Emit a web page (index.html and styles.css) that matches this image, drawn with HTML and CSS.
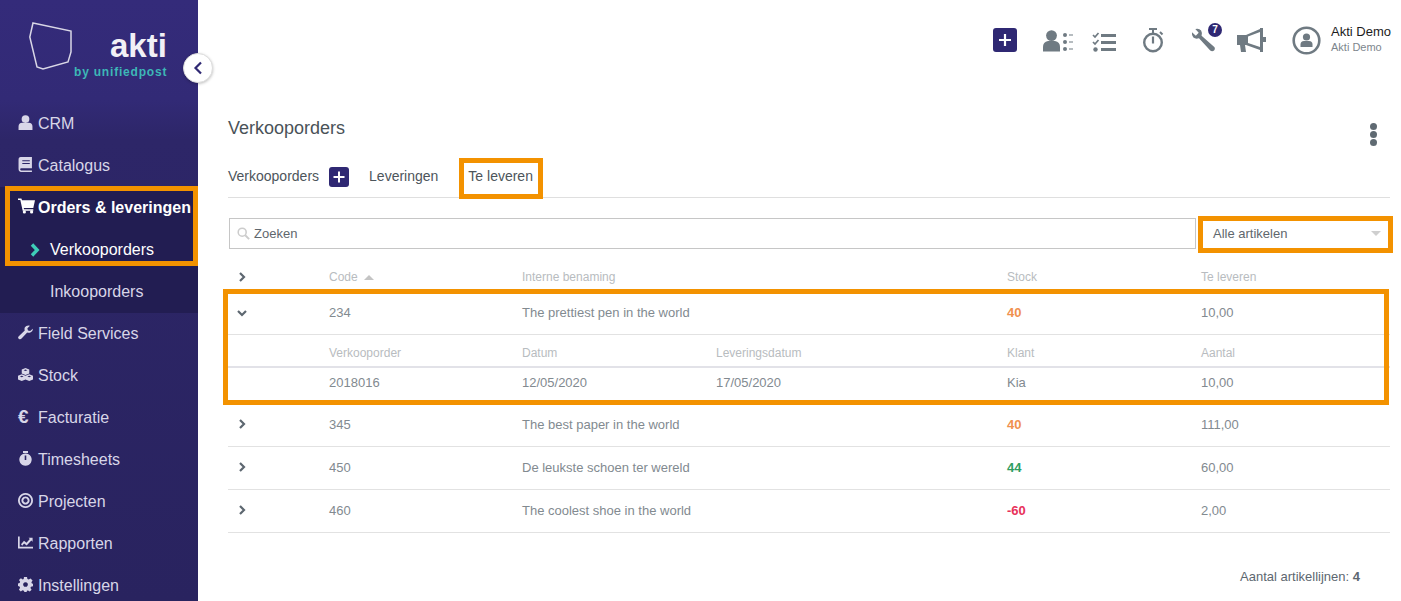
FILE: index.html
```html
<!DOCTYPE html>
<html lang="nl">
<head>
<meta charset="utf-8">
<title>Verkooporders</title>
<link rel="stylesheet" href="styles.css">
</head>
<body>
<div class="app">
  <aside class="sidebar">
    <div class="brand">
      <svg class="brand-shape" width="46" height="50" viewBox="0 0 46 50"><path d="M4 1 L42 9 L42 30 L39 40 L14 47 L8 45 L0.8 15 Z" fill="none" stroke="#d9d7e6" stroke-width="1.5"/></svg>
      <div class="brand-name">akti</div>
      <div class="brand-sub">by unifiedpost</div>
    </div>
    <nav class="nav">
      <a class="nav-item"><svg class="ni" viewBox="0 0 14 14"><circle cx="7" cy="3.8" r="3.6"/><path d="M0.5 14 V11 Q0.5 7.2 4 7.2 H10 Q13.5 7.2 13.5 11 V14 Z"/></svg>CRM</a>
      <a class="nav-item"><svg class="ni" viewBox="0 0 14 14"><path d="M2.5 0 H13 V10.5 H3 Q2 10.5 2 11.5 Q2 12.5 3 12.5 H13 V14 H2.5 Q0.5 14 0.5 11.5 V2.5 Q0.5 0 2.5 0 Z M4 3 V4 H11 V3 Z M4 5.5 V6.5 H11 V5.5 Z" fill-rule="evenodd"/></svg>Catalogus</a>
      <div class="nav-group">
        <a class="nav-item is-active"><svg class="ni ni-cart" viewBox="0 0 16 14"><path d="M0 0 H3.2 L3.8 1.6 H16 L14.4 8.8 H5.4 L5.7 10 H14.4 V11.4 H4.4 L2.2 1.4 H0 Z"/><circle cx="6" cy="12.6" r="1.5"/><circle cx="12.8" cy="12.6" r="1.5"/></svg>Orders &amp; leveringen</a>
        <a class="nav-sub is-current"><svg class="chev" width="10" height="14" viewBox="0 0 10 14"><path d="M2 1.5 L7.2 7 L2 12.5" fill="none" stroke="#3ecdb8" stroke-width="3.4"/></svg>Verkooporders</a>
        <a class="nav-sub">Inkooporders</a>
      </div>
      <a class="nav-item"><svg class="ni" viewBox="0 0 16 15"><path d="M15.8 3.4 L13 6 L10.6 5.3 L10 3 L12.8 0.3 Q9 -0.6 7.4 2 Q6.6 3.6 7.2 5.4 L0.8 11.4 Q-0.6 13 0.8 14.2 Q2.4 15.4 3.8 14 L9.8 7.6 Q11.8 8.2 13.6 7.2 Q16.2 5.8 15.8 3.4 Z"/></svg>Field Services</a>
      <a class="nav-item"><svg class="ni" viewBox="0 0 16 14"><path d="M8 0 L12 1.6 V6 L8 7.6 L4 6 V1.6 Z M4 6.6 L8 8.2 V12.4 L4 14 L0 12.4 V8.2 Z M12 6.6 L16 8.2 V12.4 L12 14 L8 12.4 V8.2 Z M6 2.4 L8 3.2 L10 2.4 L8 1.6 Z M2 9 L4 9.8 L6 9 L4 8.2 Z M10 9 L12 9.8 L14 9 L12 8.2 Z" fill-rule="evenodd"/></svg>Stock</a>
      <a class="nav-item"><span class="ni euro">€</span>Facturatie</a>
      <a class="nav-item"><svg class="ni" viewBox="0 0 14 15"><rect x="4.5" y="0" width="5" height="2"/><path d="M7 2.4 A6.2 6.2 0 1 1 6.99 2.4 Z M6.2 4.5 V9 H7.8 V4.5 Z" fill-rule="evenodd"/></svg>Timesheets</a>
      <a class="nav-item"><svg class="ni" viewBox="0 0 14 14"><path d="M7 0 A7 7 0 1 1 6.99 0 Z M7 1.7 A5.3 5.3 0 1 0 7.01 1.7 Z M7 3.2 A3.8 3.8 0 1 1 6.99 3.2 Z M7 5 A2 2 0 1 0 7.01 5 Z" fill-rule="evenodd"/></svg>Projecten</a>
      <a class="nav-item"><svg class="ni" viewBox="0 0 15 14"><path d="M0 1 H1.7 V11.3 H15 V13 H0 Z M3 8.8 L6 5.2 L8.5 7.2 L11.8 3.4 L10.6 2.2 H14.6 V6.2 L13.3 4.9 L8.7 10 L6.1 8 L4.2 10.2 Z"/></svg>Rapporten</a>
      <a class="nav-item"><svg class="ni" viewBox="0 0 14 14"><path d="M5.6 0 H8.4 L8.8 1.9 L10 2.4 L11.7 1.3 L13.6 3.2 L12.5 4.8 L13 6 L14 6.3 V8.6 L12.1 9 L11.6 10.3 L12.7 12 L11 13.6 L9.3 12.5 L8.4 12.9 L8 14 H6 L5.5 12.9 L4.2 12.4 L2.6 13.5 L0.9 11.8 L1.9 10.1 L1.4 8.9 L0 8.5 V6.1 L1.5 5.7 L2 4.5 L0.9 2.9 L2.7 1.2 L4.4 2.3 L5.3 1.8 Z M7 4.8 A2.2 2.2 0 1 0 7.01 4.8 Z" fill-rule="evenodd"/></svg>Instellingen</a>
    </nav>
    <button class="collapse" type="button"><svg width="10" height="14" viewBox="0 0 10 14"><path d="M8 1.5 L2.5 7 L8 12.5" fill="none" stroke="#2f2873" stroke-width="2.2"/></svg></button>
  </aside>

  <main class="main">
    <header class="topbar">
      <span class="add-btn add-top"><svg width="14" height="14" viewBox="0 0 14 14"><path d="M7 1 V13 M1 7 H13" stroke="#fff" stroke-width="2.2"/></svg></span>
      <svg class="ti ti-contacts" width="30" height="22" viewBox="0 0 30 22"><circle cx="8.5" cy="5.6" r="5.4" fill="#6f7a82"/><path d="M0 21.5 V17 Q0 12 5 11 H12 Q17 12 17 17 V21.5 Z" fill="#6f7a82"/><g fill="#6f7a82"><circle cx="22" cy="5" r="2"/><circle cx="22" cy="12" r="2"/><circle cx="22" cy="19" r="2"/><rect x="26" y="4.5" width="4" height="1"/><rect x="26" y="11.5" width="4" height="1"/><rect x="26" y="18.5" width="4" height="1"/></g></svg>
      <svg class="ti ti-tasks" width="25" height="20" viewBox="0 0 25 20"><g fill="none" stroke="#6f7a82" stroke-width="1.7"><path d="M1 3 L3 5 L6.5 1"/><path d="M1 10 L3 12 L6.5 8"/></g><circle cx="3.5" cy="17.5" r="2.2" fill="#6f7a82"/><g fill="#6f7a82"><rect x="9" y="2" width="15" height="3"/><rect x="9" y="9" width="15" height="3"/><rect x="9" y="16" width="15" height="3"/></g></svg>
      <svg class="ti ti-timer" width="22" height="25" viewBox="0 0 22 25"><g fill="none" stroke="#6f7a82"><circle cx="11" cy="14.5" r="8.8" stroke-width="2.4"/><path d="M7 1 H15 M11 1 V5" stroke-width="2"/><path d="M18 4 L20.5 6.5" stroke-width="2"/><path d="M11 8.5 V15.5" stroke-width="2.2"/></g></svg>
      <span class="ti-wrench-wrap"><svg width="25" height="25" viewBox="0 0 26 26"><path d="M1 4.5 L5 8 L8 5 L4.5 1 Q8.5 0 10.5 2.5 Q12 5 11 8 L24.5 20 Q25.5 22 24 23.5 Q22 25 20 23.5 L8.3 10.7 Q5 12 2.5 10 Q0.5 8 1 4.5 Z" fill="#6f7a82"/></svg><span class="badge">7</span></span>
      <svg class="ti ti-horn" width="29" height="25" viewBox="0 0 29 25"><path d="M0 7 H9 L23 1 V0 H26 V24 H23 V22 L9 17 H8 L9 24 H4 L3 17 H0 Z M11 8.5 V15 L23 19 V4 Z" fill="#6f7a82" fill-rule="evenodd"/><path d="M26 9 H29 V14 H26 Z" fill="#6f7a82"/></svg>
      <svg class="ti ti-user" width="29" height="29" viewBox="0 0 29 29"><circle cx="14.5" cy="14.5" r="12.8" fill="none" stroke="#6f7a82" stroke-width="2.6"/><circle cx="14.5" cy="11" r="3.6" fill="#6f7a82"/><path d="M8.5 21 V18.5 Q8.5 15 12 15 H17 Q20.5 15 20.5 18.5 V21 Z" fill="#6f7a82"/></svg>
      <div class="who"><div class="who-name">Akti Demo</div><div class="who-sub">Akti Demo</div></div>
    </header>

    <section class="content">
      <div class="title-row">
        <h1 class="title">Verkooporders</h1>
        <span class="kebab"><i></i><i></i><i></i></span>
      </div>
      <div class="tabs">
        <a class="tab tab-first">Verkooporders</a>
        <span class="add-btn add-tab"><svg width="12" height="12" viewBox="0 0 12 12"><path d="M6 0.5 V11.5 M0.5 6 H11.5" stroke="#fff" stroke-width="2"/></svg></span>
        <a class="tab tab-mid">Leveringen</a>
        <a class="tab tab-last">Te leveren</a>
      </div>
      <div class="filters">
        <div class="search">
          <svg width="13" height="13" viewBox="0 0 15 15"><circle cx="6" cy="6" r="4.6" fill="none" stroke="#ccc" stroke-width="1.8"/><path d="M9.5 9.5 L14 14" stroke="#ccc" stroke-width="2.2"/></svg>
          <span>Zoeken</span>
        </div>
        <div class="select"><span>Alle artikelen</span><i class="caret"></i></div>
      </div>

      <div class="table">
        <div class="row head">
          <span class="c-arrow"><svg class="arrow" viewBox="0 0 8 10"><path d="M2 1 L6 5 L2 9" /></svg></span>
          <span class="c-code">Code <i class="sort"></i></span>
          <span class="c-name">Interne benaming</span>
          <span class="c-stock">Stock</span>
          <span class="c-qty">Te leveren</span>
        </div>
        <div class="row item open">
          <span class="c-arrow"><svg class="arrow arrow-down" viewBox="0 0 10 8"><path d="M1 2 L5 6 L9 2" /></svg></span>
          <span class="c-code">234</span>
          <span class="c-name">The prettiest pen in the world</span>
          <span class="c-stock warn">40</span>
          <span class="c-qty">10,00</span>
        </div>
        <div class="row subhead">
          <span class="c-arrow"></span>
          <span class="c-code">Verkooporder</span>
          <span class="c-date">Datum</span>
          <span class="c-deliv">Leveringsdatum</span>
          <span class="c-stock">Klant</span>
          <span class="c-qty">Aantal</span>
        </div>
        <div class="row subrow">
          <span class="c-arrow"></span>
          <span class="c-code">2018016</span>
          <span class="c-date">12/05/2020</span>
          <span class="c-deliv">17/05/2020</span>
          <span class="c-stock">Kia</span>
          <span class="c-qty">10,00</span>
        </div>
        <div class="row item">
          <span class="c-arrow"><svg class="arrow" viewBox="0 0 8 10"><path d="M2 1 L6 5 L2 9" /></svg></span>
          <span class="c-code">345</span>
          <span class="c-name">The best paper in the world</span>
          <span class="c-stock warn">40</span>
          <span class="c-qty">111,00</span>
        </div>
        <div class="row item">
          <span class="c-arrow"><svg class="arrow" viewBox="0 0 8 10"><path d="M2 1 L6 5 L2 9" /></svg></span>
          <span class="c-code">450</span>
          <span class="c-name">De leukste schoen ter wereld</span>
          <span class="c-stock good">44</span>
          <span class="c-qty">60,00</span>
        </div>
        <div class="row item">
          <span class="c-arrow"><svg class="arrow" viewBox="0 0 8 10"><path d="M2 1 L6 5 L2 9" /></svg></span>
          <span class="c-code">460</span>
          <span class="c-name">The coolest shoe in the world</span>
          <span class="c-stock bad">-60</span>
          <span class="c-qty">2,00</span>
        </div>
      </div>
      <div class="total">Aantal artikellijnen: <b>4</b></div>
    </section>
  </main>
</div>
<div class="mark mark-nav"></div>
<div class="mark mark-tab"></div>
<div class="mark mark-select"></div>
<div class="mark mark-row"></div>
</body>
</html>
```

FILE: styles.css
```css
* { box-sizing: border-box; }
html, body { margin: 0; height: 100%; overflow: hidden; background: #fff; }
body { font-family: "Liberation Sans", Arial, sans-serif; font-size: 13px; color: #6f7a82; position: relative; }
.app { display: flex; height: 601px; }

.sidebar { position: relative; width: 198px; flex: none; background: linear-gradient(180deg, #342b7a 0, #322a76 100px, #2d2668 140px, #29235f 100%); color: #d8d6e8; }
.brand { height: 103px; position: relative; }
.brand-shape { position: absolute; left: 29px; top: 22px; }
.brand-name { position: absolute; left: 110px; top: 28px; font-size: 33px; font-weight: 700; color: #f1f0f6; line-height: 36px; }
.brand-sub { position: absolute; left: 74px; top: 65px; font-size: 12px; font-weight: 700; color: #3db7b6; line-height: 14px; letter-spacing: 0.8px; }
.nav { display: block; }
.nav-item { display: flex; align-items: center; height: 42px; padding-left: 18px; font-size: 16px; color: #d8d6e8; }
.ni { width: 15px; height: 15px; margin-right: 5px; flex: none; fill: #d8d6e8; position: relative; top: -2px; }
.euro { font-size: 19px; font-weight: 700; line-height: 15px; color: #d8d6e8; }
.nav-group { background: #221d52; height: 126px; }
.nav-item.is-active { color: #fff; font-weight: 700; }
.is-active .ni { fill: #fff; width: 17px; height: 16px; margin-right: 3px; }
.nav-sub { display: flex; align-items: center; height: 42px; padding-left: 50px; font-size: 16px; color: #d8d6e8; position: relative; }
.nav-sub.is-current { color: #fff; }
.chev { position: absolute; left: 30px; top: 14px; }
.collapse { position: absolute; left: 183px; top: 53px; width: 30px; height: 30px; border-radius: 50%; background: #fff; border: 1px solid #ddd; box-shadow: 0 1px 3px rgba(0,0,0,.25); padding: 0; display: flex; align-items: center; justify-content: center; }

.main { flex: 1; min-width: 0; }
.topbar { height: 80px; display: flex; align-items: center; position: relative; }
.add-btn { display: flex; align-items: center; justify-content: center; background: #2f2873; border-radius: 3px; }
.add-top { width: 24px; height: 24px; margin-left: 795px; position: relative; }
.ti { flex: none; }
.ti-contacts { margin-left: 26px; position: relative; top: 1px; }
.ti-tasks { margin-left: 19px; position: relative; top: 2px; }
.ti-timer { margin-left: 25px; }
.ti-wrench-wrap { position: relative; margin-left: 27px; width: 25px; height: 25px; }
.badge { position: absolute; left: 17px; top: -5px; width: 14px; height: 14px; border-radius: 50%; background: #2f2873; color: #fff; font-size: 10px; font-weight: 700; line-height: 14px; text-align: center; }
.ti-horn { margin-left: 21px; }
.ti-user { margin-left: 26px; }
.who { margin-left: 10px; position: relative; top: -1px; }
.who-name { font-size: 13px; color: #1c1c1c; line-height: 15px; margin-bottom: 1px; }
.who-sub { font-size: 11px; color: #7d868d; line-height: 14px; }

.content { padding: 0 11px 0 30px; }
.title-row { display: flex; justify-content: space-between; height: 80px; position: relative; }
.title { margin: 0; font-size: 18px; font-weight: 400; color: #4a5258; line-height: 24px; padding-top: 36px; }
.kebab { display: flex; flex-direction: column; gap: 1px; margin: 43px 13px 0 0; }
.kebab i { display: block; width: 7px; height: 7px; border-radius: 50%; background: #5f6a72; }
.tabs { display: flex; align-items: center; height: 39px; border-bottom: 1px solid #dfdfdf; margin-top: -1px; font-size: 14px; color: #4d555b; }
.tab { line-height: 38px; display: block; position: relative; top: -2px; }
.add-tab { width: 20px; height: 20px; margin-left: 10px; position: relative; top: -1px; }
.tab-mid { margin-left: 20px; }
.tab-last { margin-left: 30px; }
.filters { display: flex; height: 31px; margin-top: 20px; padding-left: 1px; gap: 5px; }
.search { width: 967px; border: 1px solid #c6c6c6; display: flex; align-items: center; padding-left: 7px; font-size: 13px; color: #5f676d; gap: 4px; }
.select { flex: 1; display: flex; align-items: center; justify-content: space-between; padding: 0 9px 0 12px; font-size: 13px; color: #5f676d; }
.caret { width: 0; height: 0; border-left: 5px solid transparent; border-right: 5px solid transparent; border-top: 5px solid #cfcfcf; }

.table { margin-top: 13px; }
.row { display: grid; grid-template-columns: 101px 193px 194px 291px 194px 1fr; align-items: center; }
.row .c-name { grid-column: 3 / 5; }
.row.head .c-stock, .row.item .c-stock { grid-column: 5; }
.c-arrow { padding-left: 10px; display: flex; align-items: center; }
.arrow { width: 8px; height: 10px; fill: none; stroke: #5d6770; stroke-width: 2.2; }
.arrow-down { width: 10px; height: 8px; margin-left: -1px; }
.head { height: 29px; color: #b8bcc0; font-size: 12px; }
.item { height: 43px; padding-bottom: 2px; border-bottom: 1px solid #e2e2e2; font-size: 13px; color: #828a90; }
.item.open { height: 44px; padding-bottom: 0; }
.subhead { height: 33px; border-bottom: 2px solid #e2e2e8; font-size: 12px; color: #b8bcc0; padding-top: 4px; }
.subrow { height: 36px; font-size: 13px; color: #828a90; padding-bottom: 8px; }
.sort { display: inline-block; width: 0; height: 0; border-left: 5px solid transparent; border-right: 5px solid transparent; border-bottom: 5px solid #c4c4c4; margin-left: 3px; position: relative; top: -1px; }
.warn { color: #f0914f; font-weight: 700; }
.good { color: #2f9e62; font-weight: 700; }
.bad { color: #e8315a; font-weight: 700; }
.total { text-align: right; padding-right: 30px; margin-top: 36px; font-size: 13px; color: #5d6770; line-height: 15px; }
.total b { font-weight: 700; }

.mark { position: absolute; border: 5px solid #f39200; pointer-events: none; }
.mark-nav { left: 5px; top: 186px; width: 193px; height: 80px; }
.mark-tab { left: 459px; top: 158px; width: 84px; height: 41px; }
.mark-select { left: 1198px; top: 216px; width: 195px; height: 37px; }
.mark-row { left: 223px; top: 289px; width: 1166px; height: 116px; }
```
